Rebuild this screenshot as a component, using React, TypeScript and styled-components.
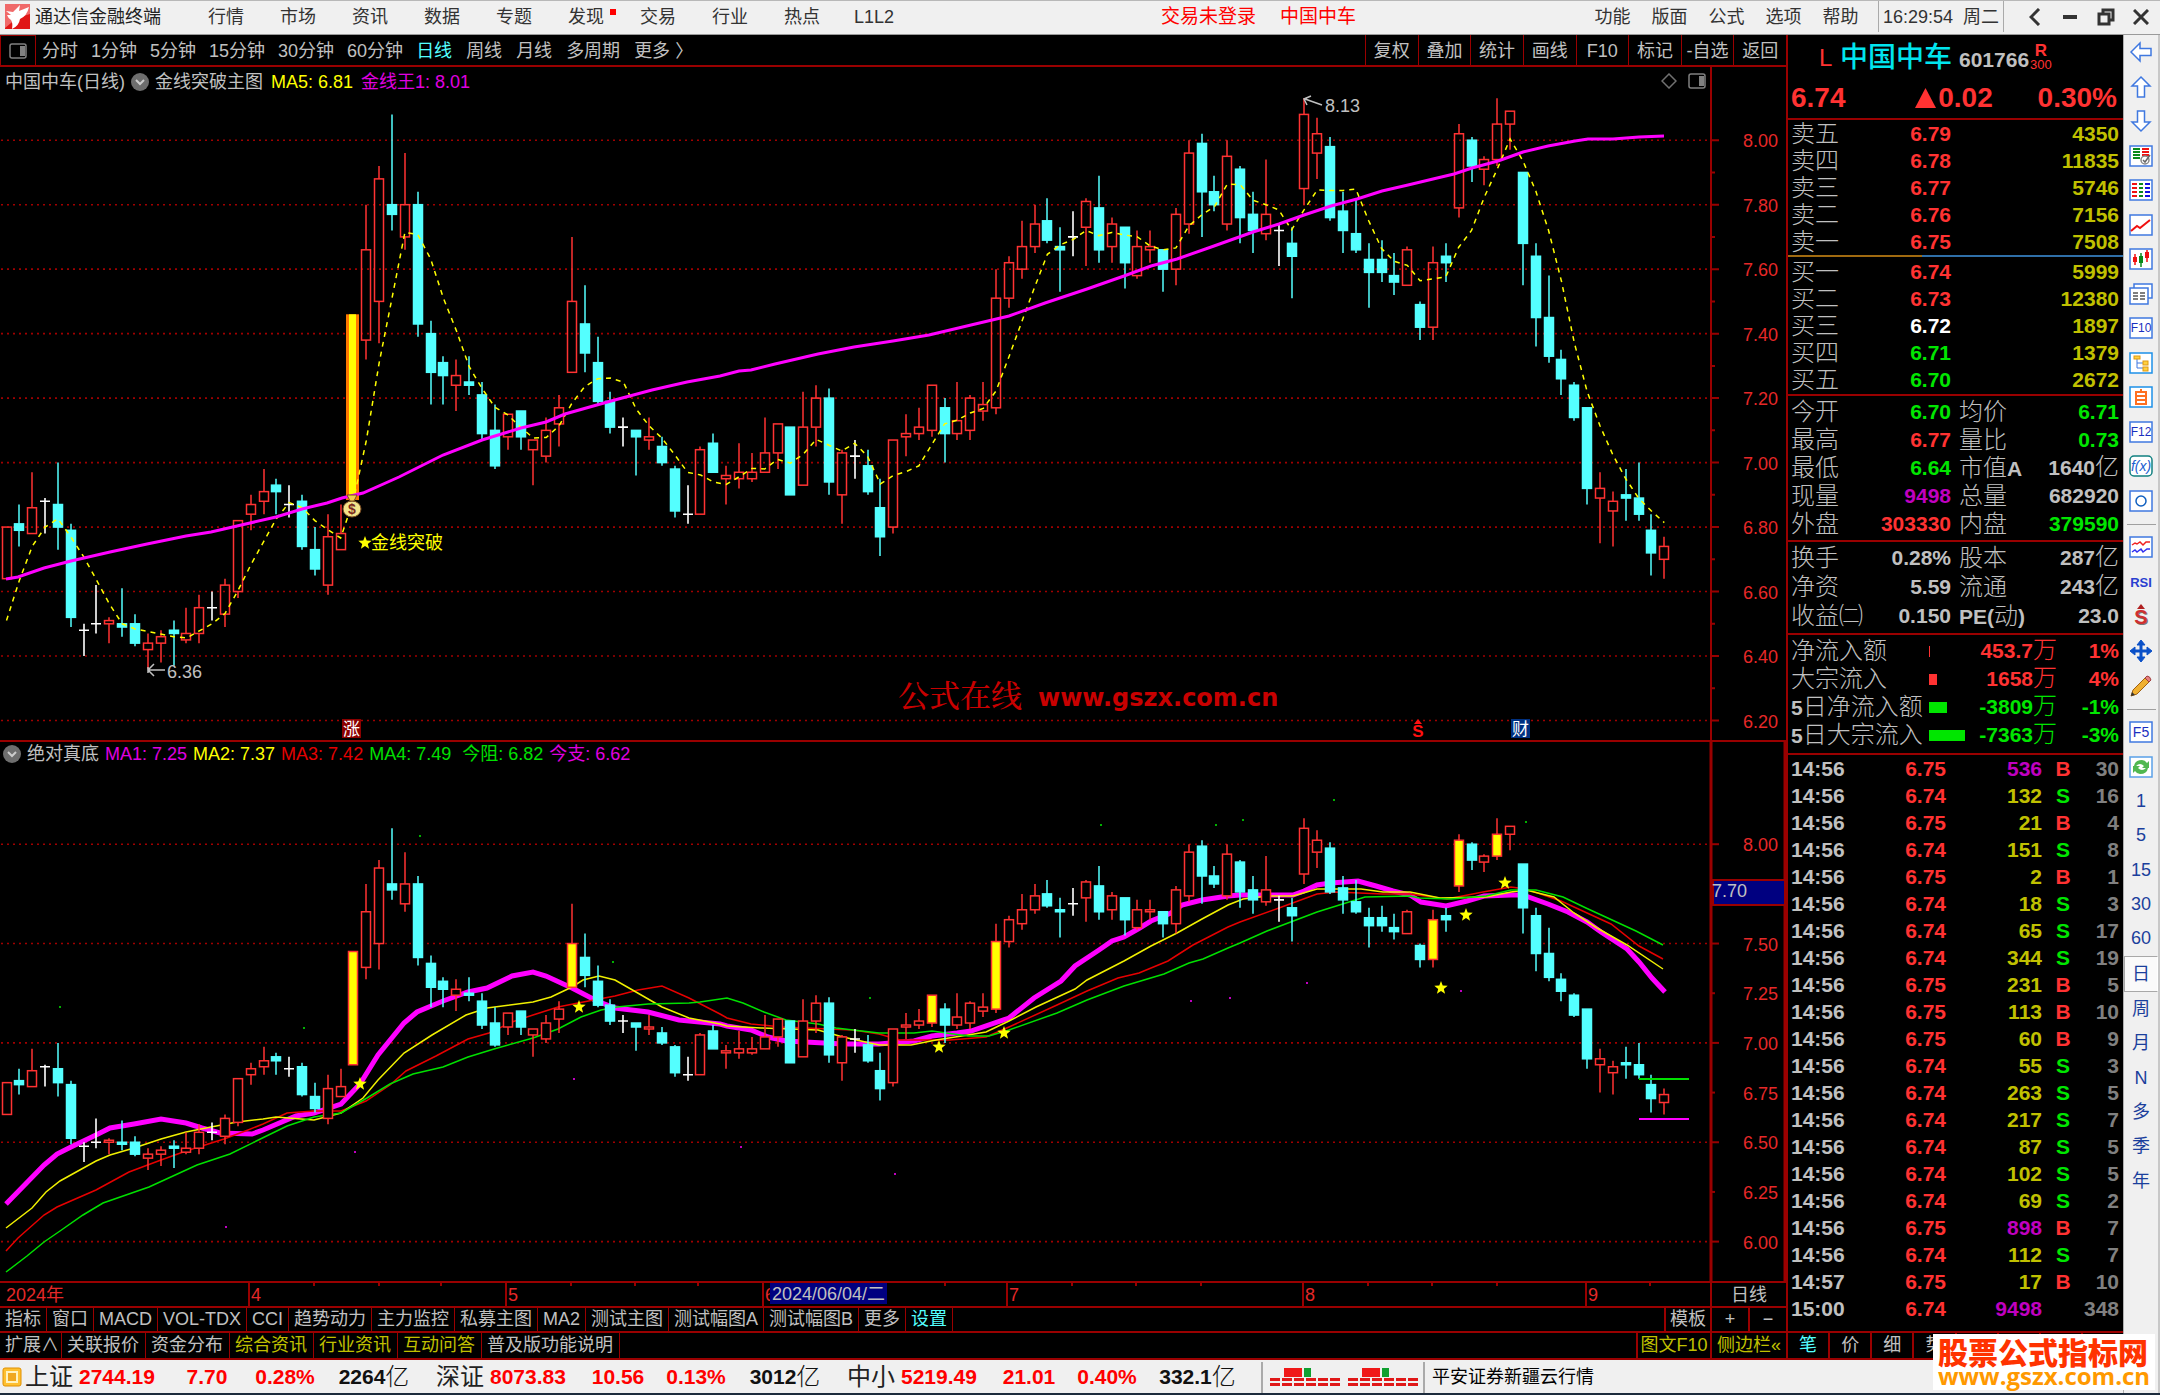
import React from "react";
import styled, { createGlobalStyle, css } from "styled-components";

const c = {
  red: "#ff3232",
  line: "#9a0000",
  cyan: "#54ffff",
  yellow: "#ffff00",
  olive: "#c0c000",
  green: "#00e600",
  magenta: "#ff00ff",
  purple: "#c000c0",
  grey: "#c0c0c0",
  dim: "#808080",
  chrome: "#f0f0f0",
};

const sans = '"Liberation Sans", "Noto Sans CJK SC", sans-serif';

const Global = createGlobalStyle`
  * { box-sizing: border-box; }
  body { margin: 0; background: #1c2b3c; font-family: ${sans}; font-size: 18px; line-height: 24px; }
  button { font: inherit; color: inherit; background: none; border: 0; padding: 0; margin: 0; cursor: pointer; white-space: nowrap; }
  table { border-collapse: collapse; table-layout: fixed; width: 100%; }
  td, th { padding: 0; font-weight: inherit; white-space: nowrap; vertical-align: middle; }
`;

/* ---------- shell ---------- */

const Page = styled.div`
  display: flex;
  flex-direction: column;
  min-height: 100vh;
  border-bottom: 2px solid #1c2b3c;
  background: ${c.chrome};
`;
const TopBar = styled.header`
  display: flex;
  align-items: center;
  height: 35px;
  padding: 0 0 2px 5px;
  border-top: 1px solid #b8b8b8;
  border-bottom: 1px solid #9a9a9a;
  color: #333;
`;
const Brand = styled.span`
  margin-left: 5px;
  width: 155px;
  color: #222;
`;
const MenuButton = styled.button<{ $w: number }>`
  position: relative;
  width: ${(p) => p.$w}px;
`;
const NewDot = styled.i`
  position: absolute;
  right: 6px;
  top: 4px;
  width: 6px;
  height: 6px;
  background: red;
`;
const Notice = styled.div`
  flex: 1;
  display: flex;
  justify-content: flex-end;
  gap: 24px;
  padding-right: 228px;
  font-size: 19px;
  color: #f00;
`;
const Clock = styled.time`
  display: flex;
  align-items: center;
  justify-content: space-between;
  width: 126px;
  height: 31px;
  margin-left: 9px;
  padding: 0 4px;
  border-left: 1px solid #aaa;
  border-right: 1px solid #aaa;
`;
const WindowKeys = styled.div`
  display: flex;
  justify-content: space-between;
  width: 156px;
  padding: 0 7px 0 19px;
`;
const WinKey = styled.button`
  display: flex;
  align-items: center;
  justify-content: center;
  width: 24px;
  height: 24px;
`;
const Body = styled.div`
  flex: 1;
  display: flex;
`;
const Main = styled.main`
  flex: 1;
  min-width: 0;
  display: flex;
  flex-direction: column;
`;
const Workspace = styled.div`
  display: flex;
  background: #000;
  color: ${c.grey};
  border-bottom: 2px solid ${c.line};
`;
const Left = styled.section`
  flex: 1;
  min-width: 0;
  display: flex;
  flex-direction: column;
`;

/* ---------- toolbar ---------- */

const Toolbar = styled.div`
  display: flex;
  height: 32px;
  border-bottom: 2px solid ${c.line};
`;
const PanelToggle = styled.button`
  width: 36px;
  margin-right: 6px;
  border: 1px solid ${c.line};
  border-bottom: 0;
  display: flex;
  align-items: center;
  justify-content: center;
`;
const Periods = styled.div<{ $gap: number }>`
  display: flex;
  align-items: center;
  gap: ${(p) => p.$gap}px;
  padding: 2px ${(p) => p.$gap}px 0 0;
`;
const Plain = styled.button<{ $color?: string }>`
  color: ${(p) => p.$color ?? c.grey};
`;
const ToolGroup = styled.div`
  display: flex;
  width: 421px;
  margin-left: auto;
`;
const Tool = styled.button`
  flex: 1;
  min-width: 0;
  padding-top: 2px;
  border-left: 1px solid ${c.line};
`;

/* ---------- charts ---------- */

const Pane = styled.div<{ $top?: boolean }>`
  position: relative;
  ${(p) => p.$top && css`border-top: 2px solid ${c.line};`}
  svg.plot { display: block; width: 100%; height: auto; }
`;
const Legend = styled.div<{ $top: number }>`
  position: absolute;
  left: ${(p) => (p.$top ? 5 : 3)}px;
  top: ${(p) => p.$top}px;
  display: flex;
  align-items: center;
  gap: ${(p) => (p.$top ? 8 : 6)}px;
`;
const LegendTitle = styled.span`
  display: flex;
  align-items: center;
  gap: 6px;
`;
const Ink = styled.span<{ $color: string }>`
  color: ${(p) => p.$color};
`;
const PaneKeys = styled.div`
  position: absolute;
  right: 80px;
  top: 6px;
  display: flex;
  align-items: center;
  gap: 11px;
`;
const DateRow = styled.div`
  display: flex;
  height: 25px;
  border-top: 2px solid ${c.line};
  svg { flex: 1; min-width: 0; height: 23px; }
`;
const DateUnit = styled.div`
  width: 76px;
  border-left: 2px solid ${c.line};
  text-align: center;
  line-height: 24px;
`;
const TabRow = styled.div<{ $h: number }>`
  display: flex;
  height: ${(p) => p.$h}px;
  border-top: 2px solid ${c.line};
`;
const TabSpace = styled.div`
  flex: 1;
`;
const Tab = styled.button<{ $color?: string; $pad?: number }>`
  padding: 0 ${(p) => p.$pad ?? 5}px 0 5px;
  border-right: 1px solid ${c.line};
  color: ${(p) => p.$color ?? c.grey};
  line-height: 23px;
`;
const SideTab = styled.button<{ $w: number; $color?: string }>`
  width: ${(p) => p.$w}px;
  border-left: 2px solid ${c.line};
  color: ${(p) => p.$color ?? c.grey};
  line-height: 23px;
`;

/* ---------- quote panel ---------- */

const Quote = styled.aside`
  width: 337px;
  display: flex;
  flex-direction: column;
  border-left: 2px solid ${c.line};
`;
const QuoteHead = styled.div`
  height: 85px;
  border-bottom: 2px solid ${c.line};
`;
const NameLine = styled.div`
  display: flex;
  align-items: center;
  height: 45px;
  padding-left: 31px;
`;
const Flag = styled.span`
  font-size: 24px;
  width: 21px;
  color: ${c.red};
`;
const StockName = styled.h1`
  margin: 0;
  font-size: 28px;
  line-height: 36px;
  font-weight: 500;
  color: #00e5ee;
`;
const Code = styled.span`
  margin: 4px 1px 0 7px;
  font-size: 21px;
  font-weight: bold;
`;
const Marks = styled.span`
  display: flex;
  flex-direction: column;
  align-items: center;
  font-size: 13px;
  line-height: 14px;
  color: ${c.red};
  b { font-size: 17px; }
`;
const PriceLine = styled.div`
  display: grid;
  grid-template-columns: 1fr auto 1fr;
  padding: 0 6px 0 3px;
  font-size: 28px;
  line-height: 36px;
  font-weight: bold;
  color: ${c.red};
`;
const Percent = styled.span`
  text-align: right;
`;
const Change = styled.span`
  display: flex;
  align-items: center;
  gap: 2px;
`;
const Block = styled.div<{ $top: number; $bottom: number; $border?: boolean }>`
  padding: ${(p) => p.$top}px 4px ${(p) => p.$bottom}px 3px;
  ${(p) => p.$border && css`border-bottom: 2px solid ${c.line};`}
`;
const Row = styled.tr<{ $h: number }>`
  height: ${(p) => p.$h}px;
  line-height: ${(p) => p.$h}px;
`;
const Label = styled.th`
  text-align: left;
  font-size: 24px;
  font-weight: 300;
  b { font-size: 21px; line-height: 0; font-weight: 700; }
`;
const Num = styled.td<{ $color?: string; $align?: string }>`
  text-align: ${(p) => p.$align ?? "right"};
  font-size: 21px;
  font-weight: bold;
  color: ${(p) => p.$color ?? c.grey};
`;
const Unit = styled.span`
  font-size: 24px;
  line-height: 0;
  font-weight: 300;
`;
const Gutter = styled.col<{ $w?: number }>`
  width: ${(p) => (p.$w ? p.$w + "px" : "auto")};
`;
const Divider = styled.div`
  height: 2px;
  background: linear-gradient(to right, #a06a10 40%, #2f6fa8 40%);
`;
const FlowBar = styled.i<{ $color: string }>`
  display: block;
  height: 11px;
  background: ${(p) => p.$color};
`;
const QuoteTabs = styled.div`
  display: flex;
  height: 27px;
  margin-top: auto;
  border-top: 2px solid ${c.line};
`;
const QuoteTab = styled.button<{ $color?: string }>`
  flex: 1;
  border-right: 2px solid ${c.line};
  color: ${(p) => p.$color ?? c.grey};
  line-height: 23px;
  &:last-child { border-right: 0; }
`;

/* ---------- side rail ---------- */

const Rail = styled.nav`
  width: 37px;
  border-left: 1px solid #b0b0b0;
  border-right: 2px solid #c8c8c8;
  display: flex;
  flex-direction: column;
`;
const RailGroup = styled.div<{ $h: number }>`
  display: flex;
  flex-direction: column;
  height: ${(p) => p.$h}px;
`;
const RailButton = styled.button<{ $on?: boolean }>`
  flex: 1;
  display: flex;
  align-items: center;
  justify-content: center;
  color: #1b3f9c;
  ${(p) => p.$on && css`background: #fafafa; border: 1px solid #a8a8a8; border-right-color: #fff;`}
`;
const RailRule = styled.hr`
  width: 29px;
  height: 1px;
  margin: 6px 3px 5px;
  border: 0;
  background: #a0a0a0;
`;

/* ---------- status bar ---------- */

const Status = styled.footer`
  flex: 1;
  display: flex;
  align-items: center;
  min-height: 33px;
  padding: 1px 0 0 2px;
  color: #000;
  white-space: nowrap;
`;
const IndexGroup = styled.div<{ $last?: boolean }>`
  display: grid;
  grid-template-columns: 54px 77px 102px 54px ${(p) => (p.$last ? 127 : 124)}px;
  align-items: center;
  font-size: 21px;
  font-weight: bold;
  color: #f00;
`;
const IndexName = styled.span`
  font-size: 24px;
  font-weight: 400;
  color: #222;
`;
const Mid = styled.span`
  display: flex;
  align-items: center;
  justify-content: center;
`;
const Turnover = styled(Mid)`
  color: #111;
`;
const Bulbs = styled.div`
  display: flex;
  align-items: center;
  height: 31px;
  padding: 0 5px 0 7px;
  border-left: 2px solid #aaa;
  border-right: 2px solid #aaa;
`;
const Broker = styled.span`
  margin-left: 7px;
`;
const StatusMark = styled.span`
  display: flex;
  width: 23px;
`;
const Stamp = styled.div`
  position: absolute;
  right: 5px;
  bottom: 5px;
  width: 222px;
  height: 56px;
  padding: 2px 0 0 5px;
  background: #fff;
  white-space: nowrap;
`;
const StampName = styled.div`
  font-family: "Noto Sans CJK SC", sans-serif;
  font-size: 30px;
  line-height: 30px;
  font-weight: 900;
  color: #ff3300;
`;
const StampUrl = styled.div`
  font-family: "Open Sans", sans-serif;
  font-size: 24px;
  line-height: 20px;
  font-weight: bold;
  color: #ff9900;
`;
const Frame = styled.div`
  position: relative;
`;

/* ---------- data ---------- */

// open, high, low, close
const K: number[][] = [
  [6.64, 6.8, 6.64, 6.8], [6.81, 6.87, 6.74, 6.79], [6.78, 6.97, 6.78, 6.86], [6.88, 6.89, 6.78, 6.88],
  [6.87, 7.0, 6.73, 6.8], [6.79, 6.81, 6.49, 6.52], [6.48, 6.5, 6.4, 6.48], [6.5, 6.62, 6.47, 6.5],
  [6.5, 6.52, 6.44, 6.51], [6.5, 6.61, 6.46, 6.49], [6.5, 6.53, 6.43, 6.44], [6.42, 6.47, 6.36, 6.44],
  [6.44, 6.48, 6.38, 6.46], [6.48, 6.51, 6.37, 6.47], [6.45, 6.55, 6.44, 6.47], [6.47, 6.59, 6.44, 6.55],
  [6.55, 6.6, 6.51, 6.55], [6.53, 6.64, 6.49, 6.62], [6.6, 6.82, 6.58, 6.82], [6.84, 6.9, 6.79, 6.87],
  [6.88, 6.98, 6.84, 6.91], [6.93, 6.95, 6.84, 6.91], [6.87, 6.93, 6.83, 6.87], [6.88, 6.9, 6.73, 6.74],
  [6.73, 6.8, 6.65, 6.67], [6.62, 6.84, 6.59, 6.77], [6.73, 6.87, 6.73, 6.78], [6.89, 7.46, 6.89, 7.46],
  [7.38, 7.8, 7.32, 7.66], [7.5, 7.92, 7.37, 7.88], [7.8, 8.08, 7.72, 7.77], [7.7, 7.96, 7.66, 7.8],
  [7.8, 7.84, 7.39, 7.43], [7.4, 7.44, 7.18, 7.28], [7.31, 7.33, 7.18, 7.27], [7.24, 7.32, 7.16, 7.27],
  [7.25, 7.33, 7.21, 7.24], [7.21, 7.25, 7.07, 7.09], [7.1, 7.18, 6.98, 6.99], [7.08, 7.15, 7.04, 7.15],
  [7.16, 7.16, 7.04, 7.08], [7.04, 7.07, 6.93, 7.07], [7.02, 7.14, 7.0, 7.1], [7.12, 7.21, 7.05, 7.17],
  [7.28, 7.7, 7.28, 7.5], [7.43, 7.55, 7.28, 7.34], [7.31, 7.39, 7.18, 7.19], [7.19, 7.22, 7.09, 7.11],
  [7.11, 7.14, 7.05, 7.11], [7.1, 7.1, 6.96, 7.08], [7.07, 7.14, 7.04, 7.08], [7.05, 7.08, 6.99, 7.0],
  [6.98, 6.99, 6.83, 6.85], [6.84, 6.93, 6.81, 6.84], [6.84, 7.05, 6.84, 7.04], [7.06, 7.09, 6.97, 6.97],
  [6.95, 6.99, 6.87, 6.96], [6.95, 7.06, 6.92, 6.97], [6.95, 7.03, 6.94, 6.97], [6.97, 7.14, 6.97, 7.03],
  [7.03, 7.12, 6.98, 7.12], [7.11, 7.11, 6.9, 6.9], [6.93, 7.22, 6.93, 7.11], [7.11, 7.24, 7.05, 7.2],
  [7.2, 7.23, 6.9, 6.94], [6.9, 7.04, 6.81, 7.03], [7.02, 7.07, 6.95, 7.02], [6.99, 7.04, 6.9, 6.91],
  [6.86, 6.95, 6.71, 6.77], [6.8, 7.07, 6.78, 7.07], [7.08, 7.15, 7.02, 7.09], [7.09, 7.17, 7.07, 7.11],
  [7.1, 7.24, 7.08, 7.24], [7.17, 7.2, 7.0, 7.09], [7.09, 7.25, 7.07, 7.13], [7.1, 7.21, 7.07, 7.2],
  [7.16, 7.25, 7.13, 7.18], [7.17, 7.6, 7.15, 7.51], [7.51, 7.64, 7.48, 7.62], [7.6, 7.75, 7.57, 7.67],
  [7.67, 7.8, 7.65, 7.74], [7.75, 7.82, 7.68, 7.69], [7.67, 7.73, 7.53, 7.66], [7.7, 7.78, 7.64, 7.7],
  [7.73, 7.82, 7.61, 7.81], [7.79, 7.89, 7.62, 7.66], [7.67, 7.76, 7.62, 7.74], [7.73, 7.73, 7.54, 7.62],
  [7.58, 7.72, 7.57, 7.67], [7.66, 7.72, 7.62, 7.67], [7.66, 7.66, 7.53, 7.6], [7.6, 7.79, 7.55, 7.77],
  [7.74, 8.0, 7.71, 7.96], [7.99, 8.02, 7.7, 7.84], [7.84, 7.89, 7.78, 7.8], [7.74, 8.0, 7.72, 7.95],
  [7.91, 7.92, 7.68, 7.76], [7.77, 7.84, 7.65, 7.72], [7.71, 7.94, 7.69, 7.77], [7.72, 7.74, 7.61, 7.72],
  [7.68, 7.73, 7.51, 7.64], [7.85, 8.13, 7.8, 8.08], [7.96, 8.07, 7.88, 8.02], [7.98, 8.01, 7.75, 7.76],
  [7.78, 7.84, 7.65, 7.72], [7.71, 7.82, 7.65, 7.66], [7.63, 7.68, 7.48, 7.59], [7.63, 7.69, 7.56, 7.59],
  [7.58, 7.65, 7.52, 7.56], [7.55, 7.67, 7.55, 7.66], [7.49, 7.5, 7.38, 7.42], [7.42, 7.67, 7.38, 7.62],
  [7.64, 7.68, 7.56, 7.62], [7.79, 8.05, 7.76, 8.02], [8.0, 8.01, 7.87, 7.92], [7.91, 7.95, 7.86, 7.94],
  [7.94, 8.13, 7.92, 8.05], [8.05, 8.09, 7.97, 8.09], [7.9, 7.9, 7.55, 7.68], [7.64, 7.68, 7.36, 7.45],
  [7.45, 7.58, 7.31, 7.33], [7.32, 7.35, 7.21, 7.26], [7.24, 7.25, 7.13, 7.14], [7.17, 7.17, 6.87, 6.92],
  [6.89, 6.97, 6.75, 6.92], [6.85, 6.91, 6.74, 6.88], [6.9, 6.98, 6.82, 6.89], [6.89, 7.0, 6.82, 6.84],
  [6.79, 6.84, 6.65, 6.72], [6.7, 6.77, 6.64, 6.74],
];

const xAt = (i: number) => 6.5 + i * 12.851;
const yMain = (p: number) => 140.2 + (8 - p) * 322.4;
const yLow = (p: number) => 844.2 + (8 - p) * 198.7;

const ma5 = K.map((_, i) => {
  if (i < 4) return [6.51, 6.635, 6.74, 6.8][i];
  return K.slice(i - 4, i + 1).reduce((s, k) => s + k[3], 0) / 5;
});

const goldLine =
  "6,579 18,577 44,568 71,561 110,552 147,544 186,536 211,532 237,526 276,517 302,509 327,503 342,498 363,493 399,477 443,455 482,440 521,428 546,422 565,414 611,401 652,390 687,382 720,376 739,371 751,370 775,364 818,354 854,347 893,341 929,335 971,325 1009,316 1045,303 1087,289 1124,276 1151,266 1177,259 1214,246 1253,232 1279,224 1304,215 1331,206 1357,199 1382,191 1408,185 1433,179 1454,174 1472,168 1498,161 1523,152 1548,146 1575,141 1588,139 1613,139 1639,137 1664,136";
const ma1 =
  "6,1204 44,1165 57,1154 71,1147 96,1135 110,1128 134,1124 161,1119 186,1123 202,1128 220,1133 252,1134 263,1130 296,1116 314,1113 341,1104 360,1084 378,1055 404,1023 417,1012 443,1001 468,992 487,988 512,976 533,972 546,976 572,988 597,1001 615,1008 648,1012 679,1020 720,1024 727,1026 751,1030 768,1037 786,1041 843,1044 879,1044 914,1041 932,1036 957,1033 971,1031 1009,1018 1034,998 1061,981 1075,966 1099,950 1112,941 1124,937 1138,929 1151,921 1171,913 1182,905 1202,900 1228,896 1240,895 1293,895 1304,891 1317,885 1331,883 1358,881 1376,886 1393,891 1410,895 1421,902 1446,906 1467,901 1484,896 1511,895 1523,895 1548,904 1568,912 1587,922 1601,932 1627,949 1639,962 1652,978 1665,992";
const ma2 =
  "6,1228 32,1208 46,1192 60,1181 96,1161 110,1155 134,1148 161,1139 186,1132 211,1127 237,1122 263,1119 276,1117 314,1120 341,1113 363,1098 378,1080 404,1053 432,1035 466,1015 487,1008 533,1002 551,997 572,987 583,980 599,976 615,980 636,992 662,1007 689,1018 720,1024 727,1026 761,1028 818,1030 843,1037 879,1045 911,1045 936,1040 968,1035 986,1032 1009,1021 1036,1007 1075,989 1087,980 1124,961 1151,946 1177,933 1202,919 1228,905 1243,899 1267,896 1293,896 1317,889 1361,889 1383,892 1410,892 1440,898 1486,897 1511,892 1526,890 1554,897 1574,913 1597,928 1627,945 1663,969";
const ma3 =
  "6,1251 18,1238 44,1215 57,1207 96,1190 129,1172 161,1160 186,1151 224,1139 248,1130 263,1124 287,1113 314,1111 341,1111 366,1101 390,1085 406,1071 436,1056 468,1039 489,1033 512,1022 533,1015 558,1007 578,1003 615,996 638,990 662,986 689,998 720,1014 727,1018 751,1024 782,1027 853,1030 879,1034 900,1040 950,1040 986,1037 1009,1027 1057,1005 1087,991 1118,978 1139,973 1168,961 1193,945 1228,927 1240,922 1279,908 1317,894 1336,892 1383,894 1410,894 1447,899 1483,892 1511,887 1526,889 1561,901 1611,924 1639,946 1663,959";
const ma4 =
  "6,1272 27,1256 44,1242 60,1231 83,1215 103,1203 149,1187 173,1176 197,1165 230,1154 287,1126 314,1117 341,1113 367,1098 390,1084 413,1074 443,1067 468,1057 494,1049 533,1038 558,1029 581,1017 601,1010 617,1007 648,1004 689,1003 700,1002 727,998 743,1003 764,1012 786,1020 818,1024 836,1028 879,1033 914,1033 932,1031 968,1036 989,1036 1009,1030 1057,1013 1087,1000 1124,986 1164,974 1189,963 1203,959 1228,948 1240,943 1267,931 1317,912 1365,897 1410,896 1419,898 1451,899 1486,896 1511,890 1536,890 1563,897 1586,908 1636,931 1663,945";

const stars = [[360, 1084], [579, 1007], [939, 1047], [1004, 1033], [1441, 988], [1466, 915], [1505, 883]];
const greenDots = [[59, 1006], [303, 1027], [419, 835], [612, 961], [869, 997], [1100, 824], [1215, 824], [1242, 819], [1333, 799], [1525, 821]];
const pinkDots = [[573, 1078], [354, 1151], [225, 1226], [740, 1146], [894, 1173], [1190, 1000], [1229, 997], [1306, 982], [1460, 990]];
const signals = new Set([27, 44, 72, 77, 111, 113, 116]);

/* ---------- chart parts ---------- */

function Candles({ y, fill, gold }: { y: (p: number) => number; fill: string; gold?: boolean }) {
  return (
    <g>
      {K.map(([o, h, l, cl], i) => {
        const x = Math.round(xAt(i));
        const top = y(Math.max(o, cl));
        const bottom = y(Math.min(o, cl));
        if (o === cl) {
          return (
            <g key={i} stroke="#fff" strokeWidth={1.6}>
              <path d={`M${x} ${y(h)}V${y(l)}M${x - 5} ${top}H${x + 5}`} />
            </g>
          );
        }
        const up = cl > o;
        if (i === 27 && !gold) {
          return (
            <g key={i}>
              <rect x={x - 7} y={top} width={13} height={bottom - top + 2} fill="#ff7800" />
              <rect x={x - 4} y={top} width={7} height={bottom - top} fill="#ffff00" />
            </g>
          );
        }
        const col = up ? c.red : c.cyan;
        const body = up ? (gold && signals.has(i) ? "#ffff00" : fill) : c.cyan;
        return (
          <g key={i} stroke={col} strokeWidth={1.5}>
            <path d={`M${x} ${y(h)}V${top}M${x} ${bottom}V${y(l)}`} />
            <rect x={x - 4.5} y={top} width={9} height={Math.max(1.5, bottom - top)} fill={body} />
          </g>
        );
      })}
    </g>
  );
}

const starPoints = (cx: number, cy: number, r: number) =>
  Array.from({ length: 10 }, (_, k) => {
    const a = -Math.PI / 2 + (k * Math.PI) / 5;
    const d = k % 2 ? r * 0.42 : r;
    return `${(cx + d * Math.cos(a)).toFixed(1)},${(cy + d * Math.sin(a)).toFixed(1)}`;
  }).join(" ");

function Grid({ levels, y }: { levels: number[]; y: (p: number) => number }) {
  return (
    <g stroke="#a00000" strokeWidth={1.6} strokeDasharray="2 4">
      {levels.map((p) => (
        <line key={p} x1={1} x2={1710} y1={y(p)} y2={y(p)} />
      ))}
    </g>
  );
}

function AxisText({ levels, y }: { levels: number[]; y: (p: number) => number }) {
  return (
    <g fill="#e62828" fontSize={18} textAnchor="end">
      {levels.map((p) => (
        <text key={p} x={1778} y={y(p) + 7}>{p.toFixed(2)}</text>
      ))}
    </g>
  );
}

const mainLevels = [8, 7.8, 7.6, 7.4, 7.2, 7, 6.8, 6.6, 6.4, 6.2];

function MainPlot() {
  return (
    <svg className="plot" viewBox="0 67 1786 673">
      <Grid levels={mainLevels} y={yMain} />
      <g stroke={c.line} strokeWidth={2}>
        <line x1={1711} x2={1711} y1={67} y2={740} />
        {mainLevels.map((p) => (
          <path key={p} d={`M1711 ${yMain(p)}h8M1711 ${yMain(p - 0.1)}h4`} />
        ))}
      </g>
      <AxisText levels={mainLevels} y={yMain} />
      <Candles y={yMain} fill="none" />
      <polyline
        points={ma5.map((p, i) => `${xAt(i).toFixed(1)},${yMain(p).toFixed(1)}`).join(" ")}
        fill="none" stroke={c.yellow} strokeWidth={1.5} strokeDasharray="5 5"
      />
      <polyline points={goldLine} fill="none" stroke={c.magenta} strokeWidth={3} />
      <g stroke={c.grey} strokeWidth={1.5} fill="none">
        <path d="M148 670H165M154 664L148 670L154 676M148 667V673" />
        <path d="M1305 99L1322 105M1311 96L1304 99L1307 105" />
      </g>
      <g fill={c.grey} fontSize={18}>
        <text x={167} y={678}>6.36</text>
        <text x={1325} y={112}>8.13</text>
      </g>
      <g>
        <ellipse cx={352} cy={509} rx={9} ry={8} fill="#f3e58a" stroke="#7a4a20" />
        <path d="M347 495h10l-3 6h-4z" fill="#f3d34a" stroke="#7a4a20" />
        <text x={352} y={514} fontSize={14} fontWeight="bold" fill="#7a2a20" textAnchor="middle">$</text>
      </g>
      <polygon points={starPoints(365, 543, 7)} fill={c.yellow} />
      <text x={371} y={549} fill={c.yellow} fontSize={18}>金线突破</text>
      <rect x={342} y={719} width={19} height={19} fill="#8b0000" />
      <text x={343} y={735} fill="#fff" fontSize={17}>涨</text>
      <text x={1418} y={737} fill="#ff1010" fontSize={17} fontWeight="bold" textAnchor="middle">S</text>
      <path d="M1418 719l4 5h-8z" fill="#ff1010" />
      <rect x={1511} y={719} width={19} height={19} fill="#003080" />
      <text x={1512} y={735} fill="#fff" fontSize={17}>财</text>
      <text x={898} y={707} fill="#c80000" fontSize={31} fontWeight={500} fontFamily='"Noto Serif CJK SC", "Noto Sans CJK SC", serif'>公式在线</text>
      <text x={1038} y={706} fill="#c80000" fontSize={24} fontWeight="bold" fontFamily='"DejaVu Sans", sans-serif'>www.gszx.com.cn</text>
    </svg>
  );
}

function LowPlot() {
  return (
    <svg className="plot" viewBox="0 742 1786 539">
      <Grid levels={[8, 7.5, 7, 6.5, 6]} y={yLow} />
      <g stroke={c.line} strokeWidth={3}>
        <path d="M1711 742V1281M1785 742V1281" />
        <g strokeWidth={2}>
          {[8, 7.5, 7, 6.5, 6].map((p) => (
            <path key={p} d={`M1711 ${yLow(p)}h8`} />
          ))}
          {[7.25, 6.75, 6.25].map((p) => (
            <path key={p} d={`M1711 ${yLow(p)}h4`} />
          ))}
        </g>
      </g>
      <AxisText levels={[8, 7.5, 7.25, 7, 6.75, 6.5, 6.25, 6]} y={yLow} />
      <rect x={1713} y={880} width={72} height={25} fill="#000080" stroke={c.line} strokeWidth={2} />
      <text x={1712} y={897} fill={c.grey} fontSize={18}>7.70</text>
      <g fill="none" strokeWidth={1.5}>
        <polyline points={ma1} stroke={c.magenta} strokeWidth={5} />
        <polyline points={ma3} stroke="#e60000" />
        <polyline points={ma2} stroke="#f0f000" />
        <polyline points={ma4} stroke="#00e000" />
      </g>
      <Candles y={yLow} fill="#000" gold />
      <path d="M1639 1079H1689" stroke="#00e000" strokeWidth={2} />
      <path d="M1639 1119H1689" stroke={c.magenta} strokeWidth={2} />
      {stars.map(([x, y]) => <polygon key={x} points={starPoints(x, y, 7)} fill={c.yellow} />)}
      {greenDots.map(([x, y]) => <rect key={x} x={x} y={y} width={2} height={2} fill="#00b000" />)}
      {pinkDots.map(([x, y]) => <rect key={x} x={x} y={y} width={2} height={2} fill="#c000c0" />)}
    </svg>
  );
}

const months: [number, string][] = [[249, "4"], [506, "5"], [763, "6"], [1007, "7"], [1303, "8"], [1586, "9"]];
const weeks = [314, 379, 441, 571, 635, 698, 822, 945, 1072, 1136, 1201, 1368, 1432, 1497, 1650];

function DateAxis() {
  return (
    <svg viewBox="0 0 1710 23" preserveAspectRatio="xMinYMid meet">
      <g stroke={c.line} strokeWidth={2}>
        {months.map(([x]) => <line key={x} x1={x} x2={x} y1={0} y2={23} />)}
        {weeks.map((x) => <line key={x} x1={x} x2={x} y1={0} y2={3} />)}
      </g>
      <g fill="#e62828" fontSize={18}>
        <text x={6} y={18}>2024年</text>
        {months.map(([x, t]) => <text key={x} x={x + 2} y={18}>{t}</text>)}
      </g>
      <rect x={770} y={0} width={117} height={21} fill="#000080" />
      <text x={772} y={17} fill={c.grey} fontSize={18}>2024/06/04/二</text>
    </svg>
  );
}

/* ---------- icons ---------- */

const Logo = () => (
  <svg width="25" height="25" viewBox="0 0 25 25">
    <rect width="25" height="25" fill="#e01515" />
    <path d="M0 0H25V10L12 14L0 24Z" fill="#f06a6a" />
    <path d="M1 7L8 8L15 1L14 7L24 3Q22 12 15 15Q14 22 7 25Q8 19 6 16Q3 14 2 11L6 11Z" fill="#fff" />
  </svg>
);
const Chevron = () => (
  <svg width="18" height="18" viewBox="0 0 18 18">
    <circle cx="9" cy="9" r="9" fill="#6e6e6e" />
    <path d="M5 7L9 11L13 7" fill="none" stroke="#ccc" strokeWidth="2" />
  </svg>
);
const SplitIcon = () => (
  <svg width="18" height="16" viewBox="0 0 18 16">
    <rect x="1" y="1" width="16" height="14" rx="2" fill="none" stroke="#808080" strokeWidth="1.5" />
    <rect x="11" y="3" width="5" height="10" fill="#808080" />
  </svg>
);
const Box = ({ children, edge = "#3f78e0" }: { children?: React.ReactNode; edge?: string }) => (
  <svg width="24" height="22" viewBox="0 0 24 22">
    <rect x="1" y="1" width="22" height="20" fill="#fff" stroke={edge} strokeWidth="1.5" />
    {children}
  </svg>
);
const Arrow = ({ turn }: { turn: number }) => (
  <svg width="24" height="24" viewBox="0 0 24 24">
    <path d="M2 12L11 3V8.500H22V15.500H11V21Z" transform={`rotate(${turn} 12 12)`} fill="#fff" stroke="#3f78e0" strokeWidth="1.5" />
  </svg>
);
const boxText = (t: string, size: number) => (
  <text x="12" y={size === 12 ? 15 : 16} fontSize={size} textAnchor="middle" fill="#1a2fc0">{t}</text>
);

const railTop: [string, React.ReactNode][] = [
  ["后退", <Arrow turn={0} />],
  ["上一个", <Arrow turn={90} />],
  ["下一个", <Arrow turn={270} />],
  ["综合屏", <Box><path d="M4 4h7M4 7h7M4 10h7M4 13h7" stroke="#0a8a1a" strokeWidth="2" /><path d="M13 4h7M13 7h7M13 10h7" stroke="#f01010" strokeWidth="2" /><circle cx="16" cy="15" r="4" fill="#fff" stroke="#888" strokeWidth="1.500" /><path d="M14 15l2 2 5-7" stroke="#666" fill="none" strokeWidth="1.500" /></Box>],
  ["行情表", <Box><g strokeWidth="2"><path d="M3 5h5M3 9h5M3 13h5M3 17h5" stroke="#f01010" /><path d="M10 5h4M10 9h4M10 13h4M10 17h4" stroke="#0a8a1a" /><path d="M16 5h5M16 9h5M16 13h5M16 17h5" stroke="#1010e0" /></g></Box>],
  ["分时图", <Box><path d="M2 17L8 12L11 14L21 6" fill="none" stroke="#f01010" strokeWidth="2" /></Box>],
  ["K线图", <Box><path d="M6 6v11M18 2v12" stroke="#f01010" strokeWidth="1.500" /><path d="M12 5v14" stroke="#0a8a1a" strokeWidth="1.500" /><path d="M4 9h4v5h-4zM16 4h4v6h-4z" fill="#f01010" /><path d="M10 8h4v7h-4z" fill="#0a8a1a" /></Box>],
  ["多股", <svg width="24" height="22" viewBox="0 0 24 22"><path d="M5 1h18v14h-18z" fill="#fff" stroke="#3f78e0" strokeWidth="1.5" /><path d="M1 5h18v16h-18z" fill="#fff" stroke="#3f78e0" strokeWidth="1.5" /><path d="M4 10h5M11 10h5M4 13h5M11 13h5M4 16h5M11 16h5" stroke="#555" strokeWidth="1.5" /></svg>],
  ["F10", <Box>{boxText("F10", 12)}</Box>],
  ["板块树", <Box edge="#1c90e8"><path d="M8 7V16H14M8 11H14" fill="none" stroke="#3f78e0" /><g fill="#ffd040" stroke="#e09a10"><rect x="5" y="4" width="6" height="3" /><rect x="14" y="9" width="5" height="4" /><rect x="14" y="15" width="5" height="4" /></g></Box>],
  ["自选", <Box edge="#1c90e8"><path d="M12 3v3M7 6h10v12H7zM7 10h10M7 14h10" fill="none" stroke="#ff7020" strokeWidth="2" /></Box>],
  ["F12", <Box>{boxText("F12", 12)}</Box>],
  ["公式", <svg width="24" height="22" viewBox="0 0 24 22"><rect x="1" y="1" width="22" height="20" rx="4" fill="#fff" stroke="#108080" strokeWidth="1.5" /><text x="12" y="16" fontSize="14" fontStyle="italic" textAnchor="middle" fill="#2060d0">f(x)</text></svg>],
  ["圆", <Box><circle cx="12" cy="11" r="5" fill="none" stroke="#1060c0" strokeWidth="1.5" /></Box>],
];
const railMid: [string, React.ReactNode][] = [
  ["波段", <Box><path d="M3 9l3-2 2 1 3-2 3 3 3-3 4 0" fill="none" stroke="#f02020" strokeWidth="1.500" /><path d="M3 16l3-2 2 2 4-3 2 3 4-3 3 0" fill="none" stroke="#3030f0" strokeWidth="1.500" /></Box>],
  ["RSI", <svg width="24" height="16" viewBox="0 0 24 16"><text x="12" y="13" fontSize="13" fontWeight="bold" textAnchor="middle" fill="#2a3fd0">RSI</text></svg>],
  ["交易", <svg width="22" height="28" viewBox="0 0 22 28"><path d="M11 2l4 5h-8z" fill="#b02020" /><text x="12" y="23" fontSize="20" fontWeight="bold" textAnchor="middle" fill="#777">S</text><text x="11" y="22" fontSize="20" fontWeight="bold" textAnchor="middle" fill="#d03030">S</text></svg>],
  ["移动", <svg width="24" height="24" viewBox="0 0 24 24"><path d="M12 1l4 5h-3v5h5v-3l5 4-5 4v-3h-5v5h3l-4 5-4-5h3v-5H6v3l-5-4 5-4v3h5V6H8z" fill="#0a50c8" stroke="#0a50c8" /></svg>],
  ["画线", <svg width="24" height="24" viewBox="0 0 24 24"><path d="M2 22L4 16L16 4L20 8L8 20Z" fill="#f0b030" stroke="#a06010" /><path d="M16 4L18 2Q21 2 22 6L20 8Z" fill="#e88080" stroke="#a04040" /><path d="M2 22L3 18L6 21Z" fill="#333" /></svg>],
];
const railLow: [string, React.ReactNode][] = [
  ["F5", <Box>{boxText("F5", 14)}</Box>],
  ["刷新", <Box edge="#5aa0e8"><path d="M5 10q1-6 8-6q3 0 5 3l2-2v7h-7l2-2q-4-4-8 0zM19 12q-1 6-8 6q-3 0-5-3l-2 2v-7h7l-2 2q4 4 8 0z" fill="#50b850" /></Box>],
  ..."1,5,15,30,60,日,周,月,N,多,季,年".split(",").map((t): [string, React.ReactNode] => [t, t]),
];

/* ---------- panel data ---------- */

const asks = [["五", "6.79", "4350"], ["四", "6.78", "11835"], ["三", "6.77", "5746"], ["二", "6.76", "7156"], ["一", "6.75", "7508"]];
const bids = [["一", "6.74", "5999"], ["二", "6.73", "12380"], ["三", "6.72", "1897"], ["四", "6.71", "1379"], ["五", "6.70", "2672"]];
const tone = (p: string) => (+p > 6.72 ? c.red : +p < 6.72 ? c.green : "#fff");

const stats: [string, string, string, React.ReactNode, React.ReactNode, string][] = [
  ["今开", "6.70", c.green, "均价", "6.71", c.green],
  ["最高", "6.77", c.red, "量比", "0.73", c.green],
  ["最低", "6.64", c.green, <>市值<b>A</b></>, <>1640<Unit>亿</Unit></>, c.grey],
  ["现量", "9498", c.purple, "总量", "682920", c.grey],
  ["外盘", "303330", c.red, "内盘", "379590", c.green],
];
const stats2: typeof stats = [
  ["换手", "0.28%", c.grey, "股本", <>287<Unit>亿</Unit></>, c.grey],
  ["净资", "5.59", c.grey, "流通", <>243<Unit>亿</Unit></>, c.grey],
  ["收益㈡", "0.150", c.grey, <><b>PE(</b>动<b>)</b></>, "23.0", c.grey],
];
const flows: [React.ReactNode, number, string, string, string][] = [
  ["净流入额", 1, "453.7", "1%", c.red],
  ["大宗流入", 8, "1658", "4%", c.red],
  [<><b>5</b>日净流入额</>, 18, "-3809", "-1%", c.green],
  [<><b>5</b>日大宗流入</>, 36, "-7363", "-3%", c.green],
];
const ticks = `14:56 6.75 536 B 30
14:56 6.74 132 S 16
14:56 6.75 21 B 4
14:56 6.74 151 S 8
14:56 6.75 2 B 1
14:56 6.74 18 S 3
14:56 6.74 65 S 17
14:56 6.74 344 S 19
14:56 6.75 231 B 5
14:56 6.75 113 B 10
14:56 6.75 60 B 9
14:56 6.74 55 S 3
14:56 6.74 263 S 5
14:56 6.74 217 S 7
14:56 6.74 87 S 5
14:56 6.74 102 S 5
14:56 6.74 69 S 2
14:56 6.75 898 B 7
14:56 6.74 112 S 7
14:57 6.75 17 B 10
15:00 6.74 9498 - 348`.split("\n").map((r) => r.split(" "));

const Book = ({ side, rows }: { side: string; rows: string[][] }) => (
  <table>
    <colgroup><Gutter $w={60} /><Gutter $w={100} /><Gutter /></colgroup>
    <tbody>
      {rows.map(([n, p, v]) => (
        <Row $h={27} key={n}>
          <Label scope="row">{side}{n}</Label>
          <Num $color={tone(p)}>{p}</Num>
          <Num $color={c.olive}>{v}</Num>
        </Row>
      ))}
    </tbody>
  </table>
);

const Stats = ({ rows, h }: { rows: typeof stats; h: number }) => (
  <table>
    <colgroup><Gutter $w={74} /><Gutter $w={86} /><Gutter $w={8} /><Gutter $w={66} /><Gutter /></colgroup>
    <tbody>
      {rows.map(([a, b, bc, d, e, ec]) => (
        <Row $h={h} key={a}>
          <Label scope="row">{a}</Label>
          <Num $color={bc}>{b}</Num>
          <td />
          <Label scope="row">{d}</Label>
          <Num $color={ec}>{e}</Num>
        </Row>
      ))}
    </tbody>
  </table>
);

function QuotePanel() {
  return (
    <Quote>
      <QuoteHead>
        <NameLine>
          <Flag>L</Flag>
          <StockName>中国中车</StockName>
          <Code>601766</Code>
          <Marks><b>R</b>300</Marks>
        </NameLine>
        <PriceLine>
          <span>6.74</span>
          <Change>
            <svg width="21" height="20" viewBox="0 0 21 20"><path d="M10.500 0L21 20H0Z" fill={c.red} /></svg>
            0.02
          </Change>
          <Percent>0.30%</Percent>
        </PriceLine>
      </QuoteHead>
      <Block $top={0} $bottom={0}><Book side="卖" rows={asks} /></Block>
      <Divider />
      <Block $top={1} $bottom={1} $border><Book side="买" rows={bids} /></Block>
      <Block $top={2} $bottom={2} $border><Stats rows={stats} h={28} /></Block>
      <Block $top={1} $bottom={3} $border><Stats rows={stats2} h={29} /></Block>
      <Block $top={2} $bottom={4} $border>
        <table>
          <colgroup><Gutter $w={138} /><Gutter $w={40} /><Gutter $w={88} /><Gutter /></colgroup>
          <tbody>
            {flows.map(([n, w, v, p, col], i) => (
              <Row $h={28} key={i}>
                <Label scope="row">{n}</Label>
                <td><FlowBar $color={col} style={{ width: w }} /></td>
                <Num $color={col}>{v}<Unit>万</Unit></Num>
                <Num $color={col}>{p}</Num>
              </Row>
            ))}
          </tbody>
        </table>
      </Block>
      <Block $top={0} $bottom={0}>
        <table>
          <colgroup><Gutter $w={80} /><Gutter $w={75} /><Gutter $w={96} /><Gutter $w={42} /><Gutter /></colgroup>
          <tbody>
            {ticks.map(([t, p, v, s, n], i) => (
              <Row $h={27} key={i}>
                <Num $align="left">{t}</Num>
                <Num $color={c.red}>{p}</Num>
                <Num $color={+v > 500 ? c.purple : c.olive}>{v}</Num>
                <Num $align="center" $color={s === "B" ? c.red : c.green}>{s === "-" ? "" : s}</Num>
                <Num $color={c.dim}>{n}</Num>
              </Row>
            ))}
          </tbody>
        </table>
      </Block>
      <QuoteTabs>
        {["笔", "价", "细", "势", "", "", "", ""].map((t, i) => (
          <QuoteTab key={i} $color={i === 0 ? c.cyan : undefined}>{t}</QuoteTab>
        ))}
      </QuoteTabs>
    </Quote>
  );
}

const indices = [
  ["上证", "2744.19", "7.70", "0.28%", "2264"],
  ["深证", "8073.83", "10.56", "0.13%", "3012"],
  ["中小", "5219.49", "21.01", "0.40%", "332.1"],
];

export default function App() {
  return (
    <Frame>
      <Global />
      <Page>
        <TopBar>
          <Logo />
          <Brand>通达信金融终端</Brand>
          {["行情", "市场", "资讯", "数据", "专题", "发现", "交易", "行业", "热点", "L1L2"].map((t) => (
            <MenuButton $w={72} key={t}>{t}{t === "发现" && <NewDot />}</MenuButton>
          ))}
          <Notice><span>交易未登录</span><span>中国中车</span></Notice>
          {["功能", "版面", "公式", "选项", "帮助"].map((t) => (
            <MenuButton $w={57} key={t}>{t}</MenuButton>
          ))}
          <Clock><span>16:29:54</span><span>周二</span></Clock>
          <WindowKeys>
            <WinKey aria-label="后退"><svg width="12" height="18" viewBox="0 0 12 18"><path d="M10 1L2 9L10 17" fill="none" stroke="#333" strokeWidth="3" /></svg></WinKey>
            <WinKey aria-label="最小化"><svg width="14" height="4"><rect width="14" height="4" fill="#333" /></svg></WinKey>
            <WinKey aria-label="还原"><svg width="18" height="18" viewBox="0 0 18 18"><path d="M6 6V2H16V12H12M2 6H12V16H2Z" fill="none" stroke="#333" strokeWidth="3" /></svg></WinKey>
            <WinKey aria-label="关闭"><svg width="16" height="16" viewBox="0 0 16 16"><path d="M1 1L15 15M15 1L1 15" stroke="#333" strokeWidth="3" /></svg></WinKey>
          </WindowKeys>
        </TopBar>
        <Body>
          <Main>
            <Workspace>
              <Left>
                <Toolbar>
                  <PanelToggle aria-label="侧栏"><SplitIcon /></PanelToggle>
                  <Periods $gap={13}>
                    {["分时", "1分钟", "5分钟", "15分钟", "30分钟", "60分钟"].map((t) => <Plain key={t}>{t}</Plain>)}
                  </Periods>
                  <Periods $gap={14}>
                    {["日线", "周线", "月线", "多周期", "更多 〉"].map((t) => (
                      <Plain key={t} $color={t === "日线" ? c.cyan : undefined}>{t}</Plain>
                    ))}
                  </Periods>
                  <ToolGroup>
                    {["复权", "叠加", "统计", "画线", "F10", "标记", "-自选", "返回"].map((t) => <Tool key={t}>{t}</Tool>)}
                  </ToolGroup>
                </Toolbar>
                <Pane>
                  <MainPlot />
                  <Legend $top={3}>
                    <LegendTitle>中国中车(日线) <Chevron /> 金线突破主图</LegendTitle>
                    <Ink $color={c.yellow}>MA5: 6.81</Ink>
                    <Ink $color="#e000e0">金线王1: 8.01</Ink>
                  </Legend>
                  <PaneKeys>
                    <svg width="16" height="16" viewBox="0 0 16 16"><path d="M8 1L15 8L8 15L1 8Z" fill="none" stroke="#707070" strokeWidth="1.500" /></svg>
                    <SplitIcon />
                  </PaneKeys>
                </Pane>
                <Pane $top>
                  <LowPlot />
                  <Legend $top={0}>
                    <LegendTitle><Chevron /> 绝对真底</LegendTitle>
                    <Ink $color="#e000e0">MA1: 7.25</Ink>
                    <Ink $color={c.yellow}>MA2: 7.37</Ink>
                    <Ink $color="#e60000">MA3: 7.42</Ink>
                    <Ink $color="#00e000">MA4: 7.49</Ink>
                    <Ink $color="#00e000">&nbsp;今阻: 6.82</Ink>
                    <Ink $color="#e000e0">今支: 6.62</Ink>
                  </Legend>
                </Pane>
                <DateRow><DateAxis /><DateUnit>日线</DateUnit></DateRow>
                <TabRow $h={25}>
                  {["指标", "窗口", "MACD", "VOL-TDX", "CCI", "趋势动力", "主力监控", "私募主图", "MA2", "测试主图", "测试幅图A", "测试幅图B", "更多", "设置"].map((t) => (
                    <Tab key={t} $color={t === "设置" ? c.cyan : undefined}>{t}</Tab>
                  ))}
                  <TabSpace />
                  <SideTab $w={46}>模板</SideTab>
                  <SideTab $w={38}>+</SideTab>
                  <SideTab $w={38}>−</SideTab>
                </TabRow>
                <TabRow $h={27}>
                  {["扩展∧", "关联报价", "资金分布", "综合资讯", "行业资讯", "互动问答", "普及版功能说明"].map((t, i) => (
                    <Tab key={t} $pad={i ? 6 : 2} $color={i > 2 && i < 6 ? c.olive : undefined}>{t}</Tab>
                  ))}
                  <TabSpace />
                  <SideTab $w={74} $color={c.olive}>图文F10</SideTab>
                  <SideTab $w={76} $color={c.olive}>侧边栏«</SideTab>
                </TabRow>
              </Left>
              <QuotePanel />
            </Workspace>
            <Status>
              <StatusMark>
                <svg width="20" height="20" viewBox="0 0 20 20"><rect x="1" y="1" width="18" height="18" rx="2" fill="#ffc030" stroke="#e09000" /><rect x="4" y="4" width="12" height="12" fill="#fff3c0" /><rect x="6" y="6" width="8" height="8" fill="#f0a820" /></svg>
              </StatusMark>
              {indices.map(([n, v, d, p, t], i) => (
                <IndexGroup key={n} $last={i === 2}>
                  <IndexName>{n}</IndexName>
                  <span>{v}</span>
                  <Mid>{d}</Mid>
                  <Mid>{p}</Mid>
                  <Turnover>{t}<Unit>亿</Unit></Turnover>
                </IndexGroup>
              ))}
              <Bulbs>
                <svg width="148" height="20" viewBox="0 0 148 20">
                  {[0, 78].map((x) => (
                    <g key={x} transform={`translate(${x} 0)`}>
                      <rect x="14" y="1" width="18" height="9" fill="#f01818" />
                      <rect x="34" y="1" width="7" height="9" fill="#10a030" />
                      <path d="M0 12.500h70M0 17.500h70" stroke="#e01818" strokeWidth="3" strokeDasharray="10 2" />
                    </g>
                  ))}
                </svg>
              </Bulbs>
              <Broker>平安证券新疆云行情</Broker>
            </Status>
          </Main>
          <Rail>
            <RailGroup $h={483}>
              {railTop.map(([n, icon]) => <RailButton key={n} aria-label={n}>{icon}</RailButton>)}
            </RailGroup>
            <RailRule />
            <RailGroup $h={173}>
              {railMid.map(([n, icon]) => <RailButton key={n} aria-label={n}>{icon}</RailButton>)}
            </RailGroup>
            <RailRule />
            <RailGroup $h={483}>
              {railLow.map(([n, icon]) => <RailButton key={n} aria-label={n} $on={n === "日"}>{icon}</RailButton>)}
            </RailGroup>
          </Rail>
        </Body>
      </Page>
      <Stamp>
        <StampName>股票公式指标网</StampName>
        <StampUrl>www.gszx.com.cn</StampUrl>
      </Stamp>
    </Frame>
  );
}
